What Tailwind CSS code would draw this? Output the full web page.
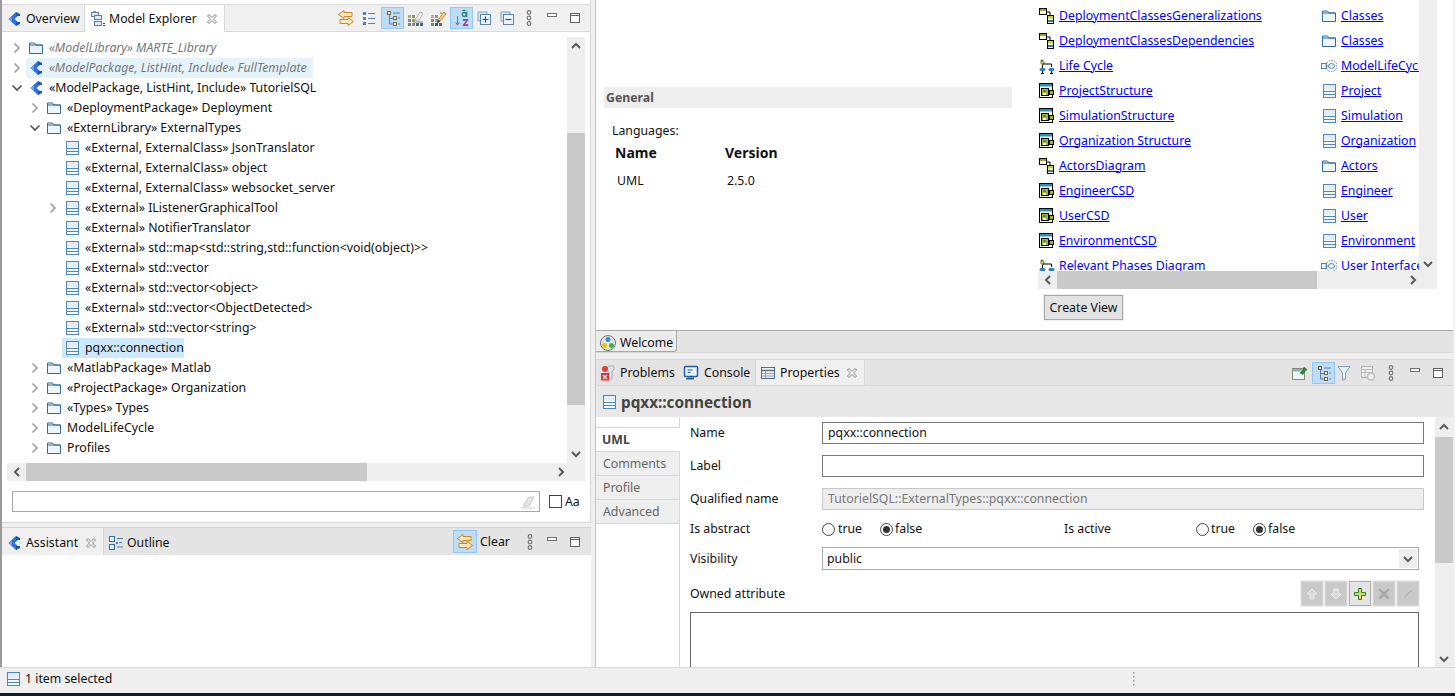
<!DOCTYPE html>
<html>
<head>
<meta charset="utf-8">
<script src="https://cdn.jsdelivr.net/npm/@tailwindcss/browser@4"></script>
</head>
<body class="m-0 overflow-hidden bg-[#f0f0f0]">
<svg width="0" height="0" class="absolute">
<defs>
<symbol id="folder" viewBox="0 0 16 16"><path d="M1.5 13.5V3h5l1.5 2h6.500v8.500z" fill="#eef5fb" stroke="#2c6c9f"/><path d="M1.500 5h13" stroke="#2c6c9f"/></symbol>
<symbol id="cls" viewBox="0 0 16 16"><rect x="2.500" y="1.500" width="12" height="13" fill="#f4f9fd" stroke="#4f87b8"/><path d="M3 2h11v5H3z" fill="#e1edf7"/><path d="M2.500 8.500h12M2.500 11.500h12" stroke="#4f87b8"/></symbol>
<symbol id="pkg" viewBox="0 0 16 16"><path d="M10 1 2.500 8l7.500 7 3-3L8.500 8 13 4z" fill="#2f6fdc"/><path d="M10 5h4V3l-4-2zM10 11h4v2l-4 2z" fill="#1c55b8"/><path d="M2.500 8l3.500-2.500v5z" fill="#6fa0ef"/></symbol>
<symbol id="cr" viewBox="0 0 12 12"><path d="M3.500 1.500 8 6l-4.500 4.500" fill="none" stroke="#a0a0a0" stroke-width="1.700"/></symbol>
<symbol id="cd" viewBox="0 0 12 12"><path d="M1.500 3.500 6 8l4.500-4.500" fill="none" stroke="#555" stroke-width="1.700"/></symbol>
<symbol id="up" viewBox="0 0 12 12"><path d="M2 8 6 4l4 4" fill="none" stroke="#5a5a5a" stroke-width="2"/></symbol>
<symbol id="dn" viewBox="0 0 12 12"><path d="M2 4l4 4 4-4" fill="none" stroke="#5a5a5a" stroke-width="2"/></symbol>
<symbol id="lf" viewBox="0 0 12 12"><path d="M8 2 4 6l4 4" fill="none" stroke="#5a5a5a" stroke-width="2"/></symbol>
<symbol id="rt" viewBox="0 0 12 12"><path d="M4 2l4 4-4 4" fill="none" stroke="#5a5a5a" stroke-width="2"/></symbol>
<symbol id="close" viewBox="0 0 12 12"><path d="M1.500 3 3 1.500 6 4.500 9 1.500 10.500 3 7.500 6l3 3L9 10.500l-3-3-3 3L1.500 9l3-3z" fill="#fff" stroke="#808080"/></symbol>
<symbol id="sync" viewBox="0 0 18 18"><path d="M7 1.500 1.500 5.500 7 9.500V7.500h8v-4H7z" fill="#fbe9bd" stroke="#c98a22"/><path d="M11 8.500l5.500 4-5.500 4v-2H3v-4h8z" fill="#fbe9bd" stroke="#c98a22"/></symbol>
<symbol id="dots" viewBox="0 0 8 16"><g fill="none" stroke="#777" stroke-width="1.200"><circle cx="4" cy="2.500" r="1.800"/><circle cx="4" cy="8" r="1.800"/><circle cx="4" cy="13.500" r="1.800"/></g></symbol>
<symbol id="min" viewBox="0 0 12 6"><rect x="1.500" y="1.500" width="9" height="3" fill="#fff" stroke="#707070"/></symbol>
<symbol id="max" viewBox="0 0 12 12"><rect x="1.500" y="1.500" width="9" height="9" fill="#fff" stroke="#606060"/><path d="M1.500 3.500h9" stroke="#606060"/></symbol>
<symbol id="listi" viewBox="0 0 16 16"><g fill="#5d7fb3"><rect x="2" y="2" width="3" height="3"/><rect x="2" y="7" width="3" height="3"/><rect x="2" y="12" width="3" height="3"/></g><path d="M7 3.500h7M7 8.500h7M7 13.500h7" stroke="#5d7fb3"/></symbol>
<symbol id="tree" viewBox="0 0 16 16"><path d="M4.500 5v9h5M4.500 8.500h5" stroke="#5d7fb3" fill="none"/><g fill="#fbf3d0" stroke="#6d6a4a"><rect x="2.500" y="1.500" width="3" height="3"/><rect x="8.500" y="6.500" width="3" height="3"/><rect x="8.500" y="12.500" width="3" height="3"/></g><path d="M8 3h7M13 8h2M13 14h2" stroke="#5d7fb3"/></symbol>
<symbol id="grid1" viewBox="0 0 16 16"><g><rect x="1" y="5" width="3" height="3" fill="#b9a96a"/><rect x="5" y="5" width="3" height="3" fill="#7f9a6a"/><rect x="1" y="9" width="3" height="3" fill="#7a8a9a"/><rect x="5" y="9" width="3" height="3" fill="#9aa05a"/><rect x="1" y="13" width="3" height="3" fill="#6a8a7a"/><rect x="5" y="13" width="3" height="3" fill="#888"/><rect x="9" y="13" width="3" height="3" fill="#3a7a6a"/><rect x="13" y="13" width="3" height="3" fill="#3a6a8a"/></g><path d="M8 10 13 2l3 1-4 8z" fill="#e8e6dd" stroke="#bbb"/><path d="M6 12h11" stroke="#888"/></symbol>
<symbol id="grid2" viewBox="0 0 16 16"><g><rect x="1" y="5" width="3" height="3" fill="#c9a9a0"/><rect x="5" y="5" width="3" height="3" fill="#9a9a6a"/><rect x="1" y="9" width="3" height="3" fill="#7a8a9a"/><rect x="5" y="9" width="3" height="3" fill="#9aa05a"/><rect x="1" y="13" width="3" height="3" fill="#6a8a7a"/><rect x="5" y="13" width="3" height="3" fill="#555"/><rect x="9" y="13" width="3" height="3" fill="#3a7a6a"/></g><path d="M8 10 14 2l2 2-6 7z" fill="#f3d98a" stroke="#b8862a"/><path d="M7 11l2-1 1 2-3 1z" fill="#1c3f8f"/><path d="M10 3h2M11 2v2" stroke="#c9a12a"/></symbol>
<symbol id="az" viewBox="0 0 18 20"><path d="M4 8v9M2 15l2 3 2-3" fill="none" stroke="#666"/><circle cx="11.500" cy="6" r="2.200" fill="none" stroke="#2f8a7a" stroke-width="1.600"/><path d="M14.200 3v6M9.500 1.500h3.500" fill="none" stroke="#2f8a7a" stroke-width="1.600"/><path d="M10 11h6v1.500L12.500 17H16v2h-6v-1.500L13.500 13H10z" fill="#9a3f9a"/></symbol>
<symbol id="expand" viewBox="0 0 14 14"><rect x="1" y="1" width="9" height="9" fill="#d8e4f0" stroke="#8aa4bf"/><rect x="3.500" y="3.500" width="10" height="10" fill="#eef4fa" stroke="#5a85ad"/><path d="M8.500 5.500v6M5.500 8.500h6" stroke="#1c5a8f" stroke-width="1.200"/></symbol>
<symbol id="collapse" viewBox="0 0 14 14"><rect x="1" y="1" width="9" height="9" fill="#d8e4f0" stroke="#8aa4bf"/><rect x="3.500" y="3.500" width="10" height="10" fill="#eef4fa" stroke="#5a85ad"/><path d="M5.500 8.500h6" stroke="#1c5a8f" stroke-width="1.200"/></symbol>
<symbol id="modelex" viewBox="0 0 16 16"><rect x="1.500" y="1.500" width="7" height="4" fill="#dfeaf5" stroke="#5a7ea8"/><rect x="4.500" y="4.500" width="7" height="4" fill="#dfeaf5" stroke="#5a7ea8"/><rect x="4.500" y="10.500" width="7" height="4" fill="#dfeaf5" stroke="#5a7ea8"/><path d="M13 12.500h2M13 14.500h2" stroke="#444"/><path d="M3 0.500h3" stroke="#c9a12a"/></symbol>
<symbol id="outline" viewBox="0 0 16 16"><rect x="1.500" y="1.500" width="5" height="5" fill="#e8f1fa" stroke="#2d6fb3"/><rect x="1.500" y="9.500" width="5" height="5" fill="#e8f1fa" stroke="#2d6fb3"/><path d="M9 3.500h6M11 7.500h3M9 12h6" stroke="#5a7a9a"/><rect x="8" y="7" width="2" height="2" fill="#5a7a9a"/></symbol>
<symbol id="erase" viewBox="0 0 16 16"><path d="M3 12 9 3h5l-5 9z" fill="#e6e6e6" stroke="#c8c8c8"/><path d="M1 14h14" stroke="#c8c8c8"/></symbol>
<symbol id="diag" viewBox="0 0 16 16"><rect x="0.500" y="0.500" width="7" height="6" fill="#fff" stroke="#000"/><rect x="1" y="1" width="6" height="2" fill="#9ca61e"/><rect x="8.500" y="7.500" width="6" height="8" fill="#fff" stroke="#000"/><rect x="9" y="8" width="5" height="2.500" fill="#c7cf20"/><rect x="9" y="12" width="5" height="2" fill="#2f7f9f"/><path d="M7 4h4v3" fill="none" stroke="#000"/></symbol>
<symbol id="life" viewBox="0 0 16 16"><path d="M3 1.500v2M1.500 3h3" stroke="#333"/><path d="M3.500 2 5.500 5l-2 2-2-2z" fill="#c9d23a" stroke="#333" stroke-width=".5"/><path d="M3.500 7v3M3.500 6h9v3" fill="none" stroke="#000"/><ellipse cx="3.500" cy="11.500" rx="3" ry="1.800" fill="#2f83b3"/><ellipse cx="12.500" cy="11.500" rx="3" ry="1.800" fill="#2f83b3"/><path d="M3.500 13v2M12.500 13v2M2 15.500h3M11 15.500h3" stroke="#000"/></symbol>
<symbol id="csd" viewBox="0 0 16 16"><rect x="0.500" y="0.500" width="13" height="14" fill="#fff" stroke="#000"/><rect x="1" y="1" width="12" height="2.500" fill="#2692b5"/><rect x="2.500" y="5.500" width="7" height="7" fill="#a4b81c" stroke="#000"/><rect x="4" y="7" width="3" height="2" fill="#2692b5"/><rect x="4" y="10" width="3" height="2" fill="#fff"/><rect x="10.500" y="7.500" width="4" height="4" fill="#a4b81c" stroke="#000"/></symbol>
<symbol id="usecase" viewBox="0 0 16 16"><rect x="0.500" y="5.500" width="5" height="5" fill="#eef4fa" stroke="#4f87b8"/><circle cx="10.500" cy="8" r="5.500" fill="none" stroke="#4f87b8" stroke-dasharray="1.500 1"/><ellipse cx="10.500" cy="8" rx="3" ry="2.500" fill="#eef4fa" stroke="#4f87b8"/><path d="M5.500 8h2" stroke="#4f87b8"/></symbol>
<symbol id="welcome" viewBox="0 0 16 16"><circle cx="8" cy="8" r="7.500" fill="#e8e6da" stroke="#777"/><circle cx="8" cy="4.500" r="2.500" fill="#2f8fd6"/><circle cx="4.500" cy="10.500" r="2.500" fill="#e8c21c"/><circle cx="11.500" cy="10.500" r="2.500" fill="#3ab53a"/></symbol>
<symbol id="problems" viewBox="0 0 16 16"><path d="M8 1h6v3l-2 3v7h-3V7L7 4z" fill="#dfe6ea" stroke="#a0acb3"/><rect x="1" y="8" width="8" height="7.500" fill="#d8303a"/><path d="M3 10l4 4M7 10l-4 4" stroke="#fff" stroke-width="1.200"/><circle cx="5" cy="4" r="3" fill="#e0403a"/></symbol>
<symbol id="console" viewBox="0 0 16 16"><rect x="1.500" y="1.500" width="13" height="10" rx="1" fill="#eaf2fa" stroke="#1f5fa0" stroke-width="1.500"/><path d="M4.500 5h5M4.500 7.500h3" stroke="#1f5fa0"/><path d="M5 12.500h6v2H3v-1z" fill="#1f5fa0"/></symbol>
<symbol id="props" viewBox="0 0 16 16"><rect x="1.500" y="2.500" width="13" height="11" fill="#f6f6f6" stroke="#4f6f93"/><path d="M1.500 5.500h13" stroke="#4f6f93" stroke-width="1.500"/><path d="M5.500 6v7M2 8.500h12M2 11h12" stroke="#8aa0b8"/></symbol>
<symbol id="pin" viewBox="0 0 18 16"><rect x="1.500" y="3.500" width="12" height="11" fill="#eef6fb" stroke="#8a8a70"/><rect x="2" y="4" width="11" height="2.500" fill="#7fb2d6"/><path d="M9 8l3-3 1-3 3 2.500-2 2-2 3z" fill="#2f8a3a" stroke="#1f6a2a" stroke-width=".5"/></symbol>
<symbol id="filter" viewBox="0 0 14 16"><path d="M1 1.500h12L8.500 8v6l-3 1V8z" fill="#eaf6fc" stroke="#7a9fc0"/></symbol>
<symbol id="hist" viewBox="0 0 16 16"><rect x="1.500" y="1.500" width="11" height="11" fill="#eee" stroke="#b0b0b0"/><path d="M1.500 4.500h11M1.500 7.500h11M5 5v7" stroke="#c0c0c0"/><circle cx="11" cy="11.500" r="3.500" fill="#f0f0f0" stroke="#bdbdbd" stroke-width="1.500"/></symbol>
</defs>
</svg>

<div class="w-[1455px] h-[696px] relative flex flex-col overflow-hidden font-['Noto_Sans',sans-serif] text-[12.3px] leading-[16px] text-[#111] bg-[#f0f0f0]">
  <div class="flex h-[667px]">
    <!-- LEFT -->
    <div class="w-[591px] shrink-0 flex flex-col border-l-2 border-[#9a9a9a]">
      <!-- Model explorer -->
      <div class="h-[523px] flex flex-col border-r border-b border-[#d8d8d8] bg-white pt-[4px] bg-clip-padding">
        <div class="h-[28px] flex bg-[#f0f0f0] border-t border-b border-[#d9d9d9] shrink-0">
          <div class="flex items-center w-[82px] pl-[4px] pt-[1px] gap-[4px]"><svg class="w-4 h-4"><use href="#pkg"/></svg><span>Overview</span></div>
          <div class="flex items-center w-[141px] -mb-px pl-[5px] pt-[1px] gap-[3px] bg-white border-l border-r border-[#d9d9d9]"><svg class="w-4 h-4"><use href="#modelex"/></svg><span>Model Explorer</span><svg class="w-3 h-3 ml-auto mr-[6px]"><use href="#close"/></svg></div>
          <div class="flex items-center ml-auto mr-[3px]">
            <div class="w-[24px] h-[22px] flex items-center justify-center mr-[-1px]"><svg class="w-[18px] h-[18px]"><use href="#sync"/></svg></div>
            <div class="w-[24px] h-[22px] flex items-center justify-center"><svg class="w-4 h-4"><use href="#listi"/></svg></div>
            <div class="w-[23px] h-[22px] flex items-center justify-center bg-[#bfdcf5] border border-[#90c8f6]"><svg class="w-4 h-4"><use href="#tree"/></svg></div>
            <div class="w-[22px] h-[22px] flex items-center justify-center"><svg class="w-4 h-4"><use href="#grid1"/></svg></div>
            <div class="w-[24px] h-[22px] flex items-center justify-center"><svg class="w-4 h-4"><use href="#grid2"/></svg></div>
            <div class="w-[23px] h-[22px] flex items-center justify-center bg-[#bfdcf5] border border-[#90c8f6]"><svg class="w-4 h-[18px]"><use href="#az"/></svg></div>
            <div class="w-[22px] h-[22px] flex items-center justify-center"><svg class="w-[14px] h-[14px]"><use href="#expand"/></svg></div>
            <div class="w-[23px] h-[22px] flex items-center justify-center"><svg class="w-[14px] h-[14px]"><use href="#collapse"/></svg></div>
            <div class="w-[22px] h-[22px] flex items-center justify-center"><svg class="w-2 h-4"><use href="#dots"/></svg></div>
            <div class="w-[23px] h-[22px] flex items-center justify-center pb-[6px]"><svg class="w-3 h-[6px]"><use href="#min"/></svg></div>
            <div class="w-[24px] h-[22px] flex items-center justify-center"><svg class="w-3 h-3"><use href="#max"/></svg></div>
          </div>
        </div>
        <div class="flex pt-[5px]">
          <div class="w-[565px] h-[426px] overflow-hidden pt-[1px]">
            <div class="h-5 flex items-center pl-[9px] text-[#777] italic"><svg class="w-3 h-3"><use href="#cr"/></svg><svg class="w-4 h-4 ml-[5px]"><use href="#folder"/></svg><span class="ml-[5px]">«ModelLibrary» MARTE_Library</span></div>
            <div class="h-5 flex items-center pl-[9px] text-[#777] italic"><svg class="w-3 h-3"><use href="#cr"/></svg><div class="flex items-center ml-[3px] bg-[#e5f3fb] pl-[2px] pr-[6px] h-5"><svg class="w-4 h-4"><use href="#pkg"/></svg><span class="ml-[5px]">«ModelPackage, ListHint, Include» FullTemplate</span></div></div>
            <div class="h-5 flex items-center pl-[9px]"><svg class="w-3 h-3"><use href="#cd"/></svg><svg class="w-4 h-4 ml-[5px]"><use href="#pkg"/></svg><span class="ml-[5px]">«ModelPackage, ListHint, Include» TutorielSQL</span></div>
            <div class="h-5 flex items-center pl-[27px]"><svg class="w-3 h-3"><use href="#cr"/></svg><svg class="w-4 h-4 ml-[5px]"><use href="#folder"/></svg><span class="ml-[5px]">«DeploymentPackage» Deployment</span></div>
            <div class="h-5 flex items-center pl-[27px]"><svg class="w-3 h-3"><use href="#cd"/></svg><svg class="w-4 h-4 ml-[5px]"><use href="#folder"/></svg><span class="ml-[5px]">«ExternLibrary» ExternalTypes</span></div>
            <div class="h-5 flex items-center pl-[62px]"><svg class="w-4 h-4"><use href="#cls"/></svg><span class="ml-[5px]">«External, ExternalClass» JsonTranslator</span></div>
            <div class="h-5 flex items-center pl-[62px]"><svg class="w-4 h-4"><use href="#cls"/></svg><span class="ml-[5px]">«External, ExternalClass» object</span></div>
            <div class="h-5 flex items-center pl-[62px]"><svg class="w-4 h-4"><use href="#cls"/></svg><span class="ml-[5px]">«External, ExternalClass» websocket_server</span></div>
            <div class="h-5 flex items-center pl-[45px]"><svg class="w-3 h-3"><use href="#cr"/></svg><svg class="w-4 h-4 ml-[5px]"><use href="#cls"/></svg><span class="ml-[5px]">«External» IListenerGraphicalTool</span></div>
            <div class="h-5 flex items-center pl-[62px]"><svg class="w-4 h-4"><use href="#cls"/></svg><span class="ml-[5px]">«External» NotifierTranslator</span></div>
            <div class="h-5 flex items-center pl-[62px]"><svg class="w-4 h-4"><use href="#cls"/></svg><span class="ml-[5px]">«External» std::map&lt;std::string,std::function&lt;void(object)&gt;&gt;</span></div>
            <div class="h-5 flex items-center pl-[62px]"><svg class="w-4 h-4"><use href="#cls"/></svg><span class="ml-[5px]">«External» std::vector</span></div>
            <div class="h-5 flex items-center pl-[62px]"><svg class="w-4 h-4"><use href="#cls"/></svg><span class="ml-[5px]">«External» std::vector&lt;object&gt;</span></div>
            <div class="h-5 flex items-center pl-[62px]"><svg class="w-4 h-4"><use href="#cls"/></svg><span class="ml-[5px]">«External» std::vector&lt;ObjectDetected&gt;</span></div>
            <div class="h-5 flex items-center pl-[62px]"><svg class="w-4 h-4"><use href="#cls"/></svg><span class="ml-[5px]">«External» std::vector&lt;string&gt;</span></div>
            <div class="h-5 flex items-center pl-[60px]"><div class="flex items-center h-5 bg-[#cde8ff] pl-[2px]"><svg class="w-4 h-4"><use href="#cls"/></svg><span class="ml-[5px]">pqxx::connection</span></div></div>
            <div class="h-5 flex items-center pl-[27px]"><svg class="w-3 h-3"><use href="#cr"/></svg><svg class="w-4 h-4 ml-[5px]"><use href="#folder"/></svg><span class="ml-[5px]">«MatlabPackage» Matlab</span></div>
            <div class="h-5 flex items-center pl-[27px]"><svg class="w-3 h-3"><use href="#cr"/></svg><svg class="w-4 h-4 ml-[5px]"><use href="#folder"/></svg><span class="ml-[5px]">«ProjectPackage» Organization</span></div>
            <div class="h-5 flex items-center pl-[27px]"><svg class="w-3 h-3"><use href="#cr"/></svg><svg class="w-4 h-4 ml-[5px]"><use href="#folder"/></svg><span class="ml-[5px]">«Types» Types</span></div>
            <div class="h-5 flex items-center pl-[27px]"><svg class="w-3 h-3"><use href="#cr"/></svg><svg class="w-4 h-4 ml-[5px]"><use href="#folder"/></svg><span class="ml-[5px]">ModelLifeCycle</span></div>
            <div class="h-5 flex items-center pl-[27px]"><svg class="w-3 h-3"><use href="#cr"/></svg><svg class="w-4 h-4 ml-[5px]"><use href="#folder"/></svg><span class="ml-[5px]">Profiles</span></div>
          </div>
          <div class="w-[18px] h-[426px] bg-[#eeeeee] flex flex-col">
            <div class="h-[96px] pt-[3px] flex justify-center"><svg class="w-3 h-3"><use href="#up"/></svg></div>
            <div class="h-[272px] bg-[#c9c9c9]"></div>
            <div class="flex-1 flex items-end justify-center pb-[3px]"><svg class="w-3 h-3"><use href="#dn"/></svg></div>
          </div>
        </div>
        <div class="ml-[5px] w-[578px] h-[18px] flex bg-[#eeeeee]">
          <div class="w-[19px] flex items-center justify-center"><svg class="w-3 h-3"><use href="#lf"/></svg></div>
          <div class="w-[341px] bg-[#c9c9c9]"></div>
          <div class="w-[200px] flex items-center justify-end"><svg class="w-3 h-3"><use href="#rt"/></svg></div>
        </div>
        <div class="flex items-center mt-[10px] ml-[10px]">
          <div class="w-[528px] h-[21px] border border-[#a8a8a8] bg-white flex items-center justify-end pr-[3px]"><svg class="w-4 h-4"><use href="#erase"/></svg></div>
          <div class="w-[13px] h-[13px] ml-[9px] border border-[#444] bg-white"></div>
          <span class="ml-[3px]">Aa</span>
        </div>
      </div>
      <!-- Assistant -->
      <div class="mt-[4px] flex-1 flex flex-col bg-white">
        <div class="h-[28px] flex bg-[#e4e4e4] border-t border-[#d4d4d4] shrink-0">
          <div class="flex items-center w-[102px] pl-[4px] pt-[2px] gap-[4px] bg-[#f0f0f0] border-r border-[#d4d4d4]"><svg class="w-4 h-4"><use href="#pkg"/></svg><span>Assistant</span><svg class="w-3 h-3 ml-auto mr-[6px]"><use href="#close"/></svg></div>
          <div class="flex items-center pl-[4px] pt-[2px] gap-[3px]"><svg class="w-4 h-4"><use href="#outline"/></svg><span>Outline</span></div>
          <div class="flex items-center ml-auto mr-[4px]">
            <div class="w-[24px] h-[23px] flex items-center justify-center bg-[#bfdcf5] border border-[#90c8f6]"><svg class="w-[18px] h-[18px]"><use href="#sync"/></svg></div>
            <span class="ml-[3px] w-[40px]">Clear</span>
            <div class="w-[20px] flex justify-center"><svg class="w-2 h-4"><use href="#dots"/></svg></div>
            <div class="w-[23px] h-[22px] flex items-center justify-center pb-[6px]"><svg class="w-3 h-[6px]"><use href="#min"/></svg></div>
            <div class="w-[24px] h-[22px] flex items-center justify-center"><svg class="w-3 h-3"><use href="#max"/></svg></div>
          </div>
        </div>
      </div>
    </div>
    <div class="w-[4px] shrink-0"></div>
    <!-- RIGHT -->
    <div class="flex-1 min-w-0 flex flex-col border-l border-[#c4c4c4] mr-[2px]">
      <!-- editor -->
      <div class="h-[331px] bg-white border-b border-[#a8a8a8] flex relative shrink-0">
        <div class="w-[416px] pl-[8px] pt-[87px] shrink-0">
          <div class="h-[21px] bg-[#eeeeee] pl-[2px] flex items-center font-bold text-[#555]">General</div>
          <div class="pl-[8px] mt-[15px]">Languages:</div>
          <div class="flex mt-[4px] pl-[11px] text-[14px] leading-[20px] font-bold"><div class="w-[110px]">Name</div><div>Version</div></div>
          <div class="flex mt-[10px] pl-[13px]"><div class="w-[110px]">UML</div><div>2.5.0</div></div>
        </div>
        <div class="ml-[26px] w-[399px] flex flex-col">
          <div class="flex h-[271px]">
            <div class="w-[381px] h-[271px] overflow-hidden pt-[3px] text-[#0000ff] grid grid-cols-[282px_99px] auto-rows-[25px]">
              <div class="flex items-center pl-[1px] gap-[4px]"><svg class="w-4 h-4"><use href="#diag"/></svg><a class="underline">DeploymentClassesGeneralizations</a></div>
              <div class="flex items-center pl-[1px] gap-[4px] whitespace-nowrap overflow-hidden"><svg class="w-4 h-4 shrink-0"><use href="#folder"/></svg><a class="underline">Classes</a></div>
              <div class="flex items-center pl-[1px] gap-[4px]"><svg class="w-4 h-4"><use href="#diag"/></svg><a class="underline">DeploymentClassesDependencies</a></div>
              <div class="flex items-center pl-[1px] gap-[4px] whitespace-nowrap overflow-hidden"><svg class="w-4 h-4 shrink-0"><use href="#folder"/></svg><a class="underline">Classes</a></div>
              <div class="flex items-center pl-[1px] gap-[4px]"><svg class="w-4 h-4"><use href="#life"/></svg><a class="underline">Life Cycle</a></div>
              <div class="flex items-center pl-[1px] gap-[4px] whitespace-nowrap overflow-hidden"><svg class="w-4 h-4 shrink-0"><use href="#usecase"/></svg><a class="underline">ModelLifeCycle</a></div>
              <div class="flex items-center pl-[1px] gap-[4px]"><svg class="w-4 h-4"><use href="#csd"/></svg><a class="underline">ProjectStructure</a></div>
              <div class="flex items-center pl-[1px] gap-[4px] whitespace-nowrap overflow-hidden"><svg class="w-4 h-4 shrink-0"><use href="#cls"/></svg><a class="underline">Project</a></div>
              <div class="flex items-center pl-[1px] gap-[4px]"><svg class="w-4 h-4"><use href="#csd"/></svg><a class="underline">SimulationStructure</a></div>
              <div class="flex items-center pl-[1px] gap-[4px] whitespace-nowrap overflow-hidden"><svg class="w-4 h-4 shrink-0"><use href="#cls"/></svg><a class="underline">Simulation</a></div>
              <div class="flex items-center pl-[1px] gap-[4px]"><svg class="w-4 h-4"><use href="#csd"/></svg><a class="underline">Organization Structure</a></div>
              <div class="flex items-center pl-[1px] gap-[4px] whitespace-nowrap overflow-hidden"><svg class="w-4 h-4 shrink-0"><use href="#cls"/></svg><a class="underline">Organization</a></div>
              <div class="flex items-center pl-[1px] gap-[4px]"><svg class="w-4 h-4"><use href="#diag"/></svg><a class="underline">ActorsDiagram</a></div>
              <div class="flex items-center pl-[1px] gap-[4px] whitespace-nowrap overflow-hidden"><svg class="w-4 h-4 shrink-0"><use href="#folder"/></svg><a class="underline">Actors</a></div>
              <div class="flex items-center pl-[1px] gap-[4px]"><svg class="w-4 h-4"><use href="#csd"/></svg><a class="underline">EngineerCSD</a></div>
              <div class="flex items-center pl-[1px] gap-[4px] whitespace-nowrap overflow-hidden"><svg class="w-4 h-4 shrink-0"><use href="#cls"/></svg><a class="underline">Engineer</a></div>
              <div class="flex items-center pl-[1px] gap-[4px]"><svg class="w-4 h-4"><use href="#csd"/></svg><a class="underline">UserCSD</a></div>
              <div class="flex items-center pl-[1px] gap-[4px] whitespace-nowrap overflow-hidden"><svg class="w-4 h-4 shrink-0"><use href="#cls"/></svg><a class="underline">User</a></div>
              <div class="flex items-center pl-[1px] gap-[4px]"><svg class="w-4 h-4"><use href="#csd"/></svg><a class="underline">EnvironmentCSD</a></div>
              <div class="flex items-center pl-[1px] gap-[4px] whitespace-nowrap overflow-hidden"><svg class="w-4 h-4 shrink-0"><use href="#cls"/></svg><a class="underline">Environment</a></div>
              <div class="flex items-center pl-[1px] gap-[4px]"><svg class="w-4 h-4"><use href="#life"/></svg><a class="underline">Relevant Phases Diagram</a></div>
              <div class="flex items-center pl-[1px] gap-[4px] whitespace-nowrap overflow-hidden"><svg class="w-4 h-4 shrink-0"><use href="#usecase"/></svg><a class="underline">User Interface</a></div>
            </div>
            <div class="w-[18px] bg-[#eeeeee] flex items-end justify-center pb-[1px]"><svg class="w-3 h-3"><use href="#dn"/></svg></div>
          </div>
          <div class="h-[18px] flex bg-[#eeeeee]">
            <div class="w-[19px] flex items-center justify-center"><svg class="w-3 h-3"><use href="#lf"/></svg></div>
            <div class="w-[260px] bg-[#c9c9c9]"></div>
            <div class="w-[102px] flex items-center justify-end"><svg class="w-3 h-3"><use href="#rt"/></svg></div>
          </div>
          <div class="ml-[6px] mt-[6px] w-[79px] h-[25px] pt-[1px] border border-[#a8a8a8] outline outline-[#eeeeee] bg-[#e3e3e3] flex items-center justify-center">Create View</div>
        </div>
      </div>
      <!-- welcome bar -->
      <div class="h-[22px] bg-[#e4e4e4] border-b border-[#d8d8d8] shrink-0 flex">
        <div class="w-[81px] h-[21px] bg-[#ececec] border-r border-b border-[#a8a8a8] rounded-br-[3px] flex items-center pl-[4px] pt-[3px] gap-[4px]"><svg class="w-4 h-4"><use href="#welcome"/></svg><span>Welcome</span></div>
      </div>
      <div class="h-[6px] shrink-0"></div>
      <!-- properties -->
      <div class="h-[27px] bg-[#e4e4e4] border-t border-b border-[#d8d8d8] flex shrink-0">
        <div class="flex items-center pl-[4px] pt-[1px] gap-[4px] w-[87px]"><svg class="w-4 h-4"><use href="#problems"/></svg><span>Problems</span></div>
        <div class="flex items-center pt-[1px] gap-[5px] w-[72px]"><svg class="w-4 h-4"><use href="#console"/></svg><span>Console</span></div>
        <div class="flex items-center pl-[4px] pt-[1px] gap-[4px] w-[110px] bg-[#f0f0f0] border-l border-r border-[#d8d8d8]"><svg class="w-4 h-4"><use href="#props"/></svg><span>Properties</span><svg class="w-3 h-3 ml-auto mr-[6px]"><use href="#close"/></svg></div>
        <div class="flex items-center ml-auto mr-[4px]">
          <div class="w-[24px] flex justify-center"><svg class="w-[18px] h-4"><use href="#pin"/></svg></div>
          <div class="w-[23px] h-[22px] flex items-center justify-center bg-[#bfdcf5] border border-[#90c8f6]"><svg class="w-4 h-4"><use href="#tree"/></svg></div>
          <div class="w-[18px] flex justify-center"><svg class="w-[14px] h-4"><use href="#filter"/></svg></div>
          <div class="w-[30px] flex justify-center"><svg class="w-4 h-4"><use href="#hist"/></svg></div>
          <div class="w-[20px] flex justify-center pr-[4px]"><svg class="w-2 h-4"><use href="#dots"/></svg></div>
          <div class="w-[24px] h-[22px] flex items-center justify-center pb-[6px]"><svg class="w-3 h-[6px]"><use href="#min"/></svg></div>
          <div class="w-[22px] h-[22px] flex items-center justify-center"><svg class="w-3 h-3"><use href="#max"/></svg></div>
        </div>
      </div>
      <div class="h-[31px] bg-[#e8e8e8] flex items-center pl-[5px] pt-[1px] gap-[4px] shrink-0"><svg class="w-4 h-4"><use href="#cls"/></svg><span class="font-bold text-[15.3px] text-[#444]">pqxx::connection</span></div>
      <div class="flex-1 flex min-h-0 bg-white overflow-hidden">
        <div class="w-[84px] border-r border-[#d8d8d8] pt-[10px] shrink-0 flex flex-col">
          <div class="h-[24px] -mr-px bg-white border-t border-[#d8d8d8] pl-[6px] flex items-center font-bold text-[#444]">UML</div>
          <div class="h-[24px] bg-[#eeeeee] border-t border-[#d8d8d8] pl-[7px] flex items-center text-[#666]">Comments</div>
          <div class="h-[24px] bg-[#eeeeee] border-t border-[#d8d8d8] pl-[7px] flex items-center text-[#666]">Profile</div>
          <div class="h-[25px] bg-[#eeeeee] border-y border-[#d8d8d8] pl-[7px] flex items-center text-[#666]">Advanced</div>
        </div>
        <div class="w-[755px] shrink-0 pl-[10px] pt-[5px] pr-[11px] flex flex-col">
          <div class="flex items-center h-[22px] shrink-0"><div class="w-[132px]">Name</div><div class="flex-1 h-[22px] border border-[#7a7a7a] pl-[5px] flex items-center">pqxx::connection</div></div>
          <div class="flex items-center h-[22px] mt-[11px] shrink-0"><div class="w-[132px]">Label</div><div class="flex-1 h-[22px] border border-[#7a7a7a]"></div></div>
          <div class="flex items-center h-[22px] mt-[11px] shrink-0"><div class="w-[132px]">Qualified name</div><div class="flex-1 h-[22px] border border-[#c8c8c8] bg-[#eeeeee] pl-[5px] flex items-center text-[#777]">TutorielSQL::ExternalTypes::pqxx::connection</div></div>
          <div class="flex items-center h-[20px] mt-[9px] shrink-0">
            <div class="w-[132px]">Is abstract</div>
            <div class="w-[13px] h-[13px] rounded-full border border-[#444]"></div><span class="ml-[3px] w-[42px]">true</span>
            <div class="w-[13px] h-[13px] rounded-full border border-[#444] flex items-center justify-center"><div class="w-[7px] h-[7px] rounded-full bg-[#333]"></div></div><span class="ml-[2px] w-[169px]">false</span>
            <div class="w-[132px]">Is active</div>
            <div class="w-[13px] h-[13px] rounded-full border border-[#444]"></div><span class="ml-[2px] w-[42px]">true</span>
            <div class="w-[13px] h-[13px] rounded-full border border-[#444] flex items-center justify-center"><div class="w-[7px] h-[7px] rounded-full bg-[#333]"></div></div><span class="ml-[2px]">false</span>
          </div>
          <div class="flex items-center h-[23px] mt-[8px] shrink-0"><div class="w-[132px]">Visibility</div><div class="w-[597px] h-[23px] border border-[#a8a8a8] pl-[4px] flex items-center justify-between pr-[1px]"><span>public</span><div class="w-[18px] h-[19px] bg-[#eeeeee] flex items-center justify-center"><svg class="w-3 h-3"><use href="#dn"/></svg></div></div></div>
          <div class="flex items-center h-[27px] mt-[10px] shrink-0"><div class="w-[610px]">Owned attribute</div>
            <div class="flex bg-[#eeeeee] gap-[2px] p-[1px]">
              <div class="w-[22px] h-[25px] bg-[#c9c9c9] border border-[#d4d4d4] flex items-center justify-center"><svg class="w-3 h-3" viewBox="0 0 12 12"><path d="M6 1 11 6H8v5H4V6H1z" fill="#d8d8d8" stroke="#eee"/></svg></div>
              <div class="w-[22px] h-[25px] bg-[#c9c9c9] border border-[#d4d4d4] flex items-center justify-center"><svg class="w-3 h-3" viewBox="0 0 12 12"><path d="M6 11 11 6H8V1H4v5H1z" fill="#d8d8d8" stroke="#eee"/></svg></div>
              <div class="w-[22px] h-[25px] bg-[#e4e4e4] border border-[#b0b0b0] flex items-center justify-center"><svg class="w-3 h-3" viewBox="0 0 12 12"><path d="M4.500.5h3v4h4v3h-4v4h-3v-4h-4v-3h4z" fill="#d6dc5a" stroke="#2f7f3a"/></svg></div>
              <div class="w-[22px] h-[25px] bg-[#c9c9c9] border border-[#d4d4d4] flex items-center justify-center"><svg class="w-3 h-3" viewBox="0 0 12 12"><path d="M2 .5 6 4l4-3.500L11.500 2 8 6l3.500 4L10 11.500 6 8l-4 3.500L.5 10 4 6 .5 2z" fill="#a8a8a8"/></svg></div>
              <div class="w-[22px] h-[25px] bg-[#c9c9c9] border border-[#d4d4d4] flex items-center justify-center"><svg class="w-3 h-3" viewBox="0 0 12 12"><path d="M1 11l1-3 7-7 2 2-7 7z" fill="#bbb" stroke="#ddd" stroke-width=".5"/></svg></div>
            </div>
          </div>
          <div class="w-[729px] h-[60px] border border-[#666] mt-[5px] shrink-0"></div>
        </div>
        <div class="w-[18px] bg-[#eeeeee] flex flex-col shrink-0">
          <div class="h-[20px] flex items-center justify-center"><svg class="w-3 h-3"><use href="#up"/></svg></div>
          <div class="h-[126px] bg-[#c9c9c9]"></div>
          <div class="flex-1 flex items-end justify-center pb-[2px]"><svg class="w-3 h-3"><use href="#dn"/></svg></div>
        </div>
      </div>
    </div>
  </div>
  <!-- status -->
  <div class="h-[26px] bg-[#efefef] border-t border-[#d8d8d8] flex items-center pl-[5px] pb-[3px] gap-[4px] relative shrink-0">
    <svg class="w-4 h-4"><use href="#cls"/></svg><span>1 item selected</span>
    <svg class="absolute left-[1132px] top-[3px] w-[4px] h-[15px]" viewBox="0 0 4 15"><g fill="#999"><rect x="1" y="1" width="1.500" height="1.500"/><rect x="1" y="5" width="1.500" height="1.500"/><rect x="1" y="9" width="1.500" height="1.500"/><rect x="1" y="13" width="1.500" height="1.500"/></g></svg>
  </div>
  <div class="h-[3px] bg-[#0e1a2b] shrink-0"></div>
</div>
</body>
</html>
